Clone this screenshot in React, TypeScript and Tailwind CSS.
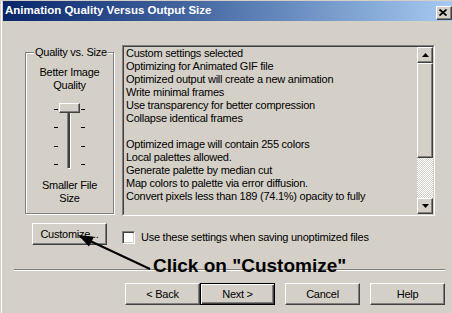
import React from 'react';

const raised =
  'border border-t-white border-l-white border-r-[#404040] border-b-[#404040] shadow-[inset_-1px_-1px_0_#808080] bg-[#d4d0c8]';

const listLines = [
  'Custom settings selected',
  'Optimizing for Animated GIF file',
  'Optimized output will create a new animation',
  'Write minimal frames',
  'Use transparency for better compression',
  'Collapse identical frames',
  '',
  'Optimized image will contain 255 colors',
  'Local palettes allowed.',
  'Generate palette by median cut',
  'Map colors to palette via error diffusion.',
  'Convert pixels less than 189 (74.1%) opacity to fully',
];

function Button({ label, isDefault = false, className = '' }: { label: string; isDefault?: boolean; className?: string }) {
  if (isDefault) {
    return (
      <div className={`w-[75px] h-[22px] border border-black bg-[#d4d0c8] shadow-[inset_1px_1px_0_#fff,inset_-1px_-1px_0_#404040,inset_-2px_-2px_0_#808080] flex items-center justify-center ${className}`}>
        {label}
      </div>
    );
  }
  return <div className={`w-[75px] h-[22px] ${raised} flex items-center justify-center ${className}`}>{label}</div>;
}

function Slider() {
  return (
    <div className="relative mx-auto w-[31px] h-[66px]">
      {/* tick marks */}
      <div className="absolute left-0 right-0 top-[6px] h-[56px] flex flex-col justify-between">
        {[0, 1, 2, 3].map(i => (
          <div key={i} className="flex justify-between h-[1px]">
            <div className="w-[4px] h-[1px] bg-black" />
            <div className="w-[4px] h-[1px] bg-black" />
          </div>
        ))}
      </div>
      {/* groove */}
      <div className="absolute left-[13px] top-[2px] bottom-0 w-[4px] border-l border-l-[#808080] border-r border-r-white border-b border-b-white bg-[#404040]" />
      {/* thumb */}
      <div className={`absolute left-[5px] top-0 w-[21px] h-[10px] ${raised}`} />
    </div>
  );
}

function ScrollBar() {
  return (
    <div className="w-[16px] h-full flex flex-col">
      <div className={`w-[16px] h-[16px] ${raised} flex items-center justify-center`}>
        <svg width="7" height="4" viewBox="0 0 7 4"><polygon points="3.5,0 7,4 0,4" fill="#000" /></svg>
      </div>
      <div className={`w-[16px] h-[95px] ${raised}`} />
      <div className="w-[16px] flex-1 bg-[image:repeating-conic-gradient(#fff_0%_25%,#d4d0c8_0%_50%)] bg-[length:2px_2px]" />
      <div className={`w-[16px] h-[16px] ${raised} flex items-center justify-center`}>
        <svg width="7" height="4" viewBox="0 0 7 4"><polygon points="0,0 7,0 3.5,4" fill="#000" /></svg>
      </div>
    </div>
  );
}

export default function App() {
  return (
    <div className="relative w-[452px] h-[313px] overflow-hidden bg-[#d4d0c8] pt-[1px] font-['Liberation_Sans',Arial,sans-serif] text-[11px] leading-[13px] tracking-[-0.25px] text-black">
      <div className="ml-[1px] border-l border-white pl-[1px] h-full">
        {/* title bar */}
        <div className="h-[20px] bg-gradient-to-r from-[#0a246a] to-[#a6caf0] flex items-center justify-between pl-[2px]">
          <span className="text-white font-bold text-[11.5px] leading-none tracking-normal">Animation Quality Versus Output Size</span>
          <div className={`w-[16px] h-[14px] mt-[3px] ${raised} flex items-center justify-center pr-[2px]`}>
            <svg width="8" height="7" viewBox="0 0 8 7">
              <path d="M0.5 0.5 L7.5 6.5 M7.5 0.5 L0.5 6.5" stroke="#000" strokeWidth="1.8" />
            </svg>
          </div>
        </div>

        {/* main row */}
        <div className="flex items-start pl-[22px] mt-[24px] gap-[8px]">
          <div className="relative mt-[7px] w-[89px] h-[162px] border border-[#808080] shadow-[inset_1px_1px_0_#fff,1px_1px_0_#fff]">
            <span className="absolute -top-[7px] left-[8px] px-[1px] bg-[#d4d0c8]">Quality vs. Size</span>
            <div className="pt-[13px] text-center">
              Better Image
              <br />
              Quality
            </div>
            <div className="mt-[11px]">
              <Slider />
            </div>
            <div className="mt-[10px] text-center">
              Smaller File
              <br />
              Size
            </div>
          </div>

          <div className="w-[313px] h-[171px] border border-t-[#808080] border-l-[#808080] border-r-white border-b-white">
            <div className="w-full h-full border border-t-[#404040] border-l-[#404040] border-r-[#d4d0c8] border-b-[#d4d0c8] flex">
              <div className="flex-1 overflow-hidden pl-[2px] whitespace-nowrap">
                {listLines.map((l, i) => (
                  <div key={i} className="h-[13px]">{l}</div>
                ))}
              </div>
              <ScrollBar />
            </div>
          </div>
        </div>

        {/* customize row */}
        <div className="flex items-start pl-[29px] mt-[7px]">
          <Button label="Customize..." />
          <div className="flex items-center ml-[15px] mt-[8px]">
            <div className="w-[13px] h-[13px] bg-white border border-t-[#808080] border-l-[#808080] border-r-white border-b-white shadow-[inset_1px_1px_0_#404040,inset_-1px_-1px_0_#d4d0c8]" />
            <span className="ml-[6px]">Use these settings when saving unoptimized files</span>
          </div>
        </div>

        {/* separator */}
        <div className="ml-[11px] mt-[24px] w-[431px] border-t border-t-[#808080] border-b border-b-white" />

        {/* wizard buttons */}
        <div className="flex pl-[122px] mt-[12px]">
          <Button label="< Back" />
          <Button label="Next >" isDefault />
          <Button label="Cancel" className="ml-[10px]" />
          <Button label="Help" className="ml-[10px]" />
        </div>
      </div>

      {/* annotation */}
      <svg className="absolute left-0 top-0" width="452" height="313" viewBox="0 0 452 313">
        <line x1="150" y1="269" x2="88" y2="240" stroke="#000" strokeWidth="2" />
        <polygon points="78,235 94,236.7 89,246.5" fill="#000" />
      </svg>
      <span className="absolute left-[153px] top-[256px] text-[19px] leading-[19px] tracking-normal font-bold">
        Click on "Customize"
      </span>
    </div>
  );
}
